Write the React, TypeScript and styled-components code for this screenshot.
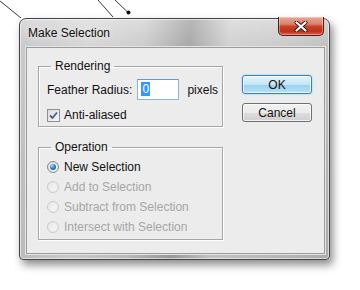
import React from "react";
import styled, { createGlobalStyle } from "styled-components";

const Global = createGlobalStyle`
  html, body { margin: 0; padding: 0; background: #ffffff; }
  body {
    width: 360px;
    height: 290px;
    overflow: hidden;
    font-family: "Liberation Sans", Arial, sans-serif;
    font-size: 12px;
    color: #111;
  }
`;

const Page = styled.div`
  position: relative;
  width: 360px;
  height: 290px;
  box-sizing: border-box;
  padding: 18px 0 0 19px;
`;

const Annotation = styled.svg`
  position: absolute;
  left: 0;
  top: 0;
  pointer-events: none;
  z-index: 2;
`;

const Window = styled.div`
  width: 311px;
  height: 242px;
  box-sizing: border-box;
  display: flex;
  flex-direction: column;
  padding: 0 4px 5px 6px;
  border: 1px solid #444;
  border-radius: 7px 7px 4px 4px;
  background:
    linear-gradient(95deg,
      rgba(255,255,255,0) 0%,
      rgba(255,255,255,0.25) 22%,
      rgba(255,255,255,0.05) 38%,
      rgba(0,0,0,0.16) 52%,
      rgba(255,255,255,0.15) 64%,
      rgba(255,255,255,0.05) 78%,
      rgba(0,0,0,0.06) 100%),
    linear-gradient(#dadada, #c9c9c9 28px, #bdbdbd 60%, #b6b6b6);
  box-shadow:
    inset 0 0 0 1px rgba(255,255,255,0.55),
    3px 5px 9px rgba(0,0,0,0.45);
`;

const TitleBar = styled.div`
  height: 28px;
  display: flex;
  align-items: center;
  justify-content: space-between;
  padding-left: 2px;
`;

const Title = styled.span`
  font-family: "Liberation Sans", Arial, sans-serif;
  font-size: 12px;
  color: #101010;
  text-shadow: 0 0 6px rgba(255,255,255,0.9);
`;

const CloseButton = styled.div`
  align-self: flex-start;
  margin-top: -2px;
  margin-right: 1px;
  width: 46px;
  height: 19px;
  box-sizing: border-box;
  border: 1px solid #5a1a12;
  border-top: none;
  border-radius: 0 0 5px 5px;
  display: flex;
  align-items: center;
  justify-content: center;
  background: linear-gradient(#eaa898 0%, #d9806b 40%, #c94129 52%, #c0301a 80%, #d8634b 100%);
  box-shadow: inset 0 0 0 1px rgba(255,255,255,0.35);
`;

const Content = styled.div`
  flex: 1;
  display: flex;
  gap: 19px;
  padding: 11px 0 0 11px;
  background: #ececec;
  border: 1px solid #9c9c9c;
  box-shadow: 0 0 0 1px #e4e4e4;
`;

const LeftColumn = styled.div`
  width: 185px;
  display: flex;
  flex-direction: column;
  gap: 13px;
`;

const Group = styled.fieldset<{ $pt: number; $pb: number }>`
  margin: 0;
  width: 185px;
  box-sizing: border-box;
  border: 1px solid #a6a6a6;
  box-shadow: 1px 1px 0 #fff, inset 1px 1px 0 #fff;
  padding: ${(p) => p.$pt}px 0 ${(p) => p.$pb}px 8px;
  min-width: 0;
`;

const Legend = styled.legend`
  margin-left: 4px;
  padding: 0 4px;
  line-height: 14px;
  font-size: 12px;
  color: #111;
`;

const Row = styled.div<{ $h: number; $mt?: number }>`
  display: flex;
  align-items: center;
  height: ${(p) => p.$h}px;
  margin-top: ${(p) => p.$mt ?? 0}px;
`;

const Label = styled.span<{ $disabled?: boolean }>`
  color: ${(p) => (p.$disabled ? "#a6a6a6" : "#111")};
  white-space: nowrap;
`;

const Input = styled.div`
  width: 42px;
  height: 21px;
  box-sizing: border-box;
  margin-left: 5px;
  margin-right: 8px;
  background: #fff;
  border: 1px solid #8fb4d9;
  border-top-color: #6c98c8;
  padding: 2px 0 0 3px;
  display: flex;
  align-items: flex-start;
`;

const Selected = styled.span`
  background: #3399ff;
  color: #fff;
  line-height: 14px;
  padding: 0 1px;
`;

const CheckBox = styled.span`
  width: 13px;
  height: 13px;
  box-sizing: border-box;
  border: 1px solid #8e8f8f;
  background: linear-gradient(135deg, #dcdcdc, #f6f6f6);
  margin-right: 4px;
  display: flex;
  align-items: center;
  justify-content: center;
`;

const Radio = styled.span<{ $checked?: boolean; $disabled?: boolean }>`
  width: 12px;
  height: 12px;
  box-sizing: border-box;
  border-radius: 50%;
  border: 1px solid ${(p) => (p.$disabled ? "#cbcbcb" : "#8a8a8a")};
  background: ${(p) =>
    p.$disabled
      ? "radial-gradient(circle at 60% 60%, #f4f4f4, #e6e6e6)"
      : "radial-gradient(circle at 60% 60%, #fafafa, #d6d6d6)"};
  margin-right: 5px;
  display: flex;
  align-items: center;
  justify-content: center;
  &::after {
    content: "";
    display: ${(p) => (p.$checked ? "block" : "none")};
    width: 6px;
    height: 6px;
    border-radius: 50%;
    background: radial-gradient(circle at 35% 30%, #a8e0ff 0%, #2f86d0 45%, #0c3f78 100%);
  }
`;

const RightColumn = styled.div`
  display: flex;
  flex-direction: column;
  gap: 9px;
  padding-top: 16px;
`;

const Button = styled.div<{ $default?: boolean }>`
  width: 70px;
  height: 19px;
  box-sizing: border-box;
  border-radius: 3px;
  display: flex;
  align-items: center;
  justify-content: center;
  font-size: 12px;
  color: #111;
  border: 1px solid ${(p) => (p.$default ? "#3c7fb1" : "#707070")};
  background: ${(p) =>
    p.$default
      ? "linear-gradient(#e5f4fc 0%, #c4e5f6 50%, #98d1ef 51%, #b6e0f5 100%)"
      : "linear-gradient(#f2f2f2 0%, #ebebeb 50%, #dddddd 51%, #cfcfcf 100%)"};
  box-shadow: ${(p) =>
    p.$default
      ? "inset 0 0 0 1px rgba(255,255,255,0.7), 0 0 2px #6ec5f5"
      : "inset 0 0 0 1px rgba(255,255,255,0.7)"};
`;

export default function App() {
  return (
    <>
      <Global />
      <Page>
        <Annotation width="360" height="30" viewBox="0 0 360 30">
          <line x1="0" y1="1" x2="21" y2="18" stroke="#222" strokeWidth="0.9" />
          <line x1="98" y1="0" x2="113" y2="17" stroke="#222" strokeWidth="0.9" />
          <line x1="115" y1="0" x2="128" y2="12.5" stroke="#222" strokeWidth="0.9" />
          <circle cx="128.5" cy="12.5" r="2" fill="#111" />
        </Annotation>
        <Window>
          <TitleBar>
            <Title>Make Selection</Title>
            <CloseButton>
              <svg width="14" height="11" viewBox="0 0 14 11">
                <path d="M2.5 1.5 L11.5 9.5 M11.5 1.5 L2.5 9.5" stroke="#3a1410" strokeWidth="4" strokeLinecap="round" />
                <path d="M2.5 1.5 L11.5 9.5 M11.5 1.5 L2.5 9.5" stroke="#ffffff" strokeWidth="2.2" strokeLinecap="round" />
              </svg>
            </CloseButton>
          </TitleBar>
          <Content>
            <LeftColumn>
              <Group $pt={6} $pb={4}>
                <Legend>Rendering</Legend>
                <Row $h={21}>
                  <Label>Feather Radius:</Label>
                  <Input>
                    <Selected>0</Selected>
                  </Input>
                  <Label>pixels</Label>
                </Row>
                <Row $h={14} $mt={8}>
                  <CheckBox>
                    <svg width="11" height="11" viewBox="0 0 11 11">
                      <path d="M2 5.5 L4.5 8 L9 2.5" fill="none" stroke="#4a5d8f" strokeWidth="1.8" />
                    </svg>
                  </CheckBox>
                  <Label>Anti-aliased</Label>
                </Row>
              </Group>
              <Group $pt={3} $pb={2}>
                <Legend>Operation</Legend>
                <Row $h={20}>
                  <Radio $checked />
                  <Label>New Selection</Label>
                </Row>
                <Row $h={20}>
                  <Radio $disabled />
                  <Label $disabled>Add to Selection</Label>
                </Row>
                <Row $h={20}>
                  <Radio $disabled />
                  <Label $disabled>Subtract from Selection</Label>
                </Row>
                <Row $h={20}>
                  <Radio $disabled />
                  <Label $disabled>Intersect with Selection</Label>
                </Row>
              </Group>
            </LeftColumn>
            <RightColumn>
              <Button $default>OK</Button>
              <Button>Cancel</Button>
            </RightColumn>
          </Content>
        </Window>
      </Page>
    </>
  );
}
